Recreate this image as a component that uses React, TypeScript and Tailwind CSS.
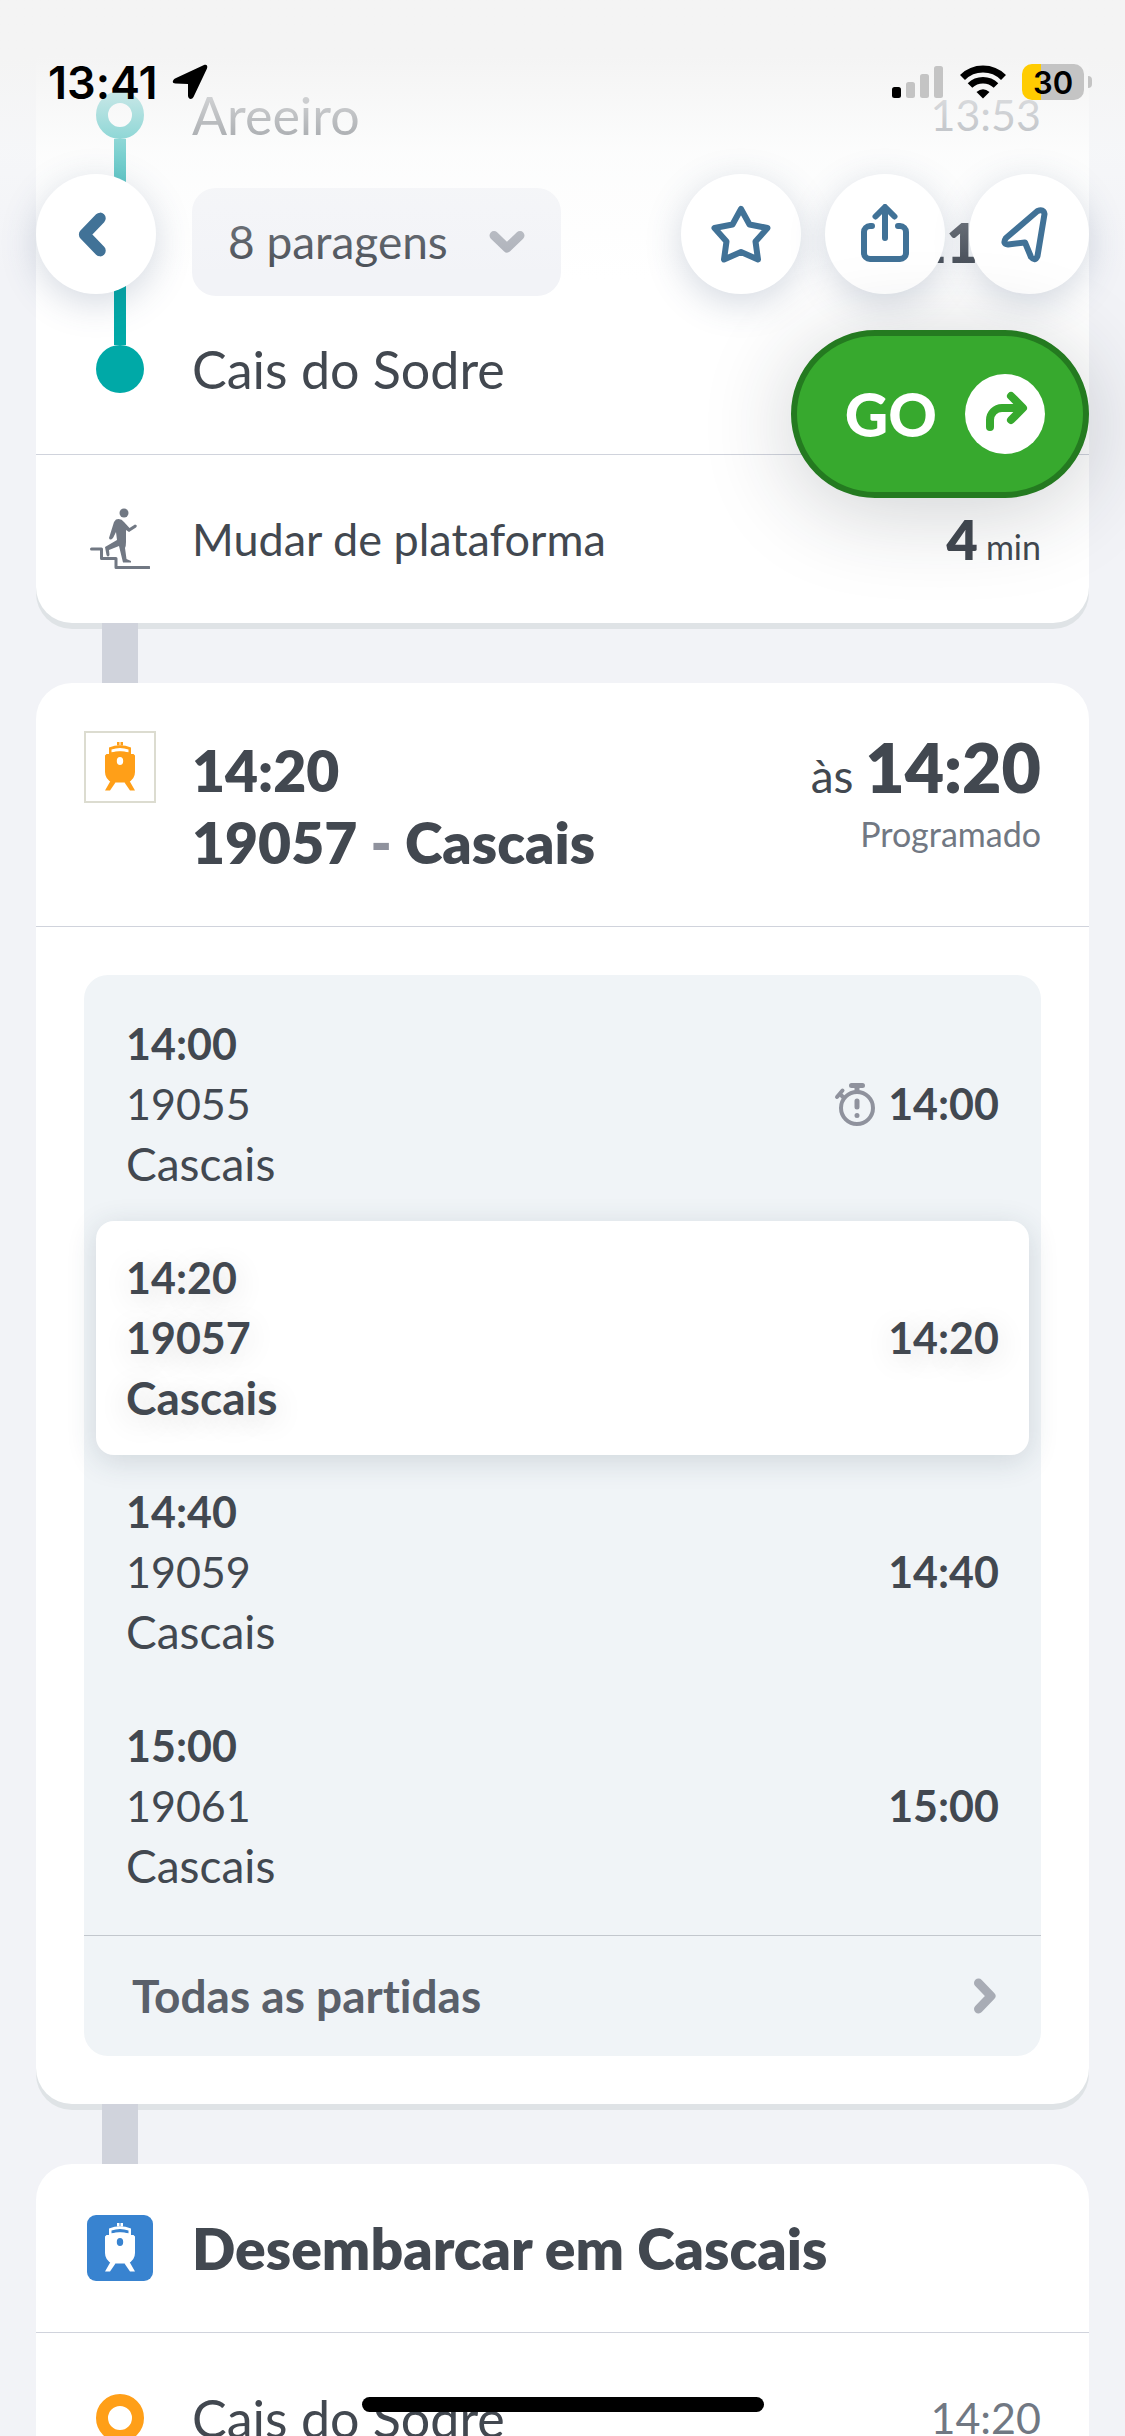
import type { ReactNode } from "react";

interface Departure {
  time: string;
  train: string;
  destination: string;
  unconfirmed?: boolean;
  selected?: boolean;
}

const DEPARTURES: Departure[] = [
  { time: "14:00", train: "19055", destination: "Cascais", unconfirmed: true },
  { time: "14:20", train: "19057", destination: "Cascais", selected: true },
  { time: "14:40", train: "19059", destination: "Cascais" },
  { time: "15:00", train: "19061", destination: "Cascais" },
];

function ChevronIcon({ className }: { className: string }) {
  return (
    <svg viewBox="0 0 24 36" className={className} fill="none" stroke="currentColor">
      <path d="M5.500 5 18 18 5.500 31" strokeWidth="9" strokeLinecap="round" strokeLinejoin="round" />
    </svg>
  );
}

function StarIcon() {
  return (
    <svg viewBox="0 0 60 60" className="size-[60px]" fill="none" stroke="currentColor">
      <path
        d="M30 5 38.500 20.500 56.500 24 44.500 37.500 47 55.500 30 48 13 55.500 15.500 37.500 3.500 24 21.500 20.500Z"
        strokeWidth="6"
        strokeLinejoin="round"
      />
    </svg>
  );
}

function ShareIcon() {
  return (
    <svg viewBox="0 0 60 60" className="size-[60px]" fill="none" stroke="currentColor">
      <path
        d="M17 22H15A6 6 0 0 0 9 28V49A6 6 0 0 0 15 55H45A6 6 0 0 0 51 49V28A6 6 0 0 0 45 22H43M30 34V4M20.500 12.500 30 3 39.500 12.500"
        strokeWidth="6"
        strokeLinecap="round"
        strokeLinejoin="round"
      />
    </svg>
  );
}

function NavigateIcon() {
  return (
    <svg viewBox="0 0 60 60" className="size-[60px]" fill="none" stroke="currentColor">
      <path
        d="M38.500 7 7 34Q3 40 9 40.500L26 38.500 32 53Q36 58 38.500 52L45.500 10Q44.500 4.500 38.500 7Z"
        strokeWidth="6"
        strokeLinejoin="round"
      />
    </svg>
  );
}

function TurnIcon() {
  return (
    <svg viewBox="0 0 80 80" className="size-20" fill="none" stroke="currentColor">
      <path
        d="M25 53V46A12 12 0 0 1 37 34H57M46 22 58 34 46 46"
        strokeWidth="8"
        strokeLinecap="round"
        strokeLinejoin="round"
      />
    </svg>
  );
}

function TrainIcon() {
  return (
    <svg viewBox="0 0 32 50" className="h-[50px] w-8" fill="currentColor">
      <path d="M13 0h2.500v3.500H13zM16.500 0H19v3.500h-2.500z" />
      <path
        fillRule="evenodd"
        d="M5 5.500Q16 1 27 5.500V12H5ZM7.500 7.500V10.500Q16 8 24.500 10.500V7.500Q16 4.500 7.500 7.500Z"
      />
      <path
        fillRule="evenodd"
        d="M5 11Q16 8.500 27 11V12H29.500L31 13.500V30Q31 37 24 40.500H8Q1 37 1 30V13.500L2.500 12H5ZM16 15A3.200 4 0 1 0 16 23A3.200 4 0 1 0 16 15Z"
      />
      <path d="M7 38 11.500 40.500 6 48.500H1ZM25 38 20.500 40.500 26 48.500H31Z" />
    </svg>
  );
}

function StairsIcon() {
  return (
    <svg viewBox="0 2 60 66" className="h-[66px] w-[60px] text-[#717883]" fill="currentColor">
      <circle cx="34" cy="9" r="4.500" />
      <path d="M26 15.500Q31 14 34 18L39.500 24 45 20.500Q48 21 46 23.500L39 28 36 26V38Q36 42 35 44L36.500 55 41 57V58.500H33L29 42 19 46 19.500 51Q18 54 16.500 51L15 43 27 36 26 28 23 34Q20 37 19 34L24 18Z" />
      <path
        d="M1.500 45H11.500V54.500H26V63.500H59"
        fill="none"
        stroke="currentColor"
        strokeWidth="3"
        strokeLinecap="round"
        strokeLinejoin="round"
      />
    </svg>
  );
}

function StopwatchIcon() {
  return (
    <svg
      viewBox="0 0 42 46"
      className="h-[46px] w-[42px] text-[#8f929d]"
      fill="none"
      stroke="currentColor"
      strokeLinecap="round"
    >
      <circle cx="23" cy="27" r="16" strokeWidth="4" />
      <path d="M17.500 4.500H28.500M23 5V10" strokeWidth="5" />
      <path d="M3 16 8.500 9.500M6 13 9 16" strokeWidth="4" />
      <path d="M23 20V26M23 34.500V34.600" strokeWidth="5" />
    </svg>
  );
}

function StatusBar() {
  return (
    <div className="absolute inset-x-0 top-0 flex h-[164px] items-center justify-between pr-[33px] pl-12 font-[Inter,sans-serif] text-black">
      <div className="flex items-center gap-[14px]">
        <span className="text-[45px] leading-none font-semibold">13:41</span>
        <svg viewBox="0 0 36 36" className="size-9" fill="currentColor">
          <path d="M32 1 3 14.500C0 16.500 0 19.500 3.500 19.500L16 20V32C16.500 35.500 20 36 21.500 33L35 4.500C36 1.500 34.500 0 32 1Z" />
        </svg>
      </div>
      <div className="flex items-center">
        <svg viewBox="0 0 52 34" className="mr-4 h-[34px] w-[52px]" fill="#c4c4c4">
          <rect x="0" y="22" width="9" height="11" rx="2.500" fill="#000" />
          <rect x="14" y="17" width="9" height="16" rx="2.500" />
          <rect x="28" y="9" width="9" height="24" rx="2.500" />
          <rect x="42" y="1" width="9" height="32" rx="2.500" />
        </svg>
        <svg viewBox="0 0 46 34" className="mr-4 h-[34px] w-[46px]" fill="none" stroke="#000">
          <path d="M2.500 12.500A29 29 0 0 1 43.500 12.500" strokeWidth="7" />
          <path d="M10 20.500A18.500 18.500 0 0 1 36 20.500" strokeWidth="6.500" />
          <path d="M23 33.500 16.500 27Q23 21.500 29.500 27Z" fill="#000" stroke="none" />
        </svg>
        <div className="flex h-9 w-[62px] items-center justify-center rounded-[10px] bg-linear-to-r from-[#ffcc01] from-31% to-[#c4c4c4] to-31%">
          <span className="text-[31px] leading-none font-semibold">30</span>
        </div>
        <div className="ml-1 h-3 w-1 rounded-r-full bg-[#c4c4c4]" />
      </div>
    </div>
  );
}

function RoundButton({ label, children }: { label: string; children: ReactNode }) {
  return (
    <button
      type="button"
      aria-label={label}
      className="flex size-[120px] items-center justify-center rounded-full bg-white text-[#417297] shadow-[0_9px_36px_rgba(60,80,120,0.22)]"
    >
      {children}
    </button>
  );
}

function Minutes({ value }: { value: number }) {
  return (
    <p className="flex items-baseline gap-2 pt-2">
      <strong className="text-[54px] font-extrabold">{value}</strong>
      <span className="text-[34px]">min</span>
    </p>
  );
}

function Connector() {
  return <div className="relative ml-[66px] h-[60px] w-9 bg-[#d0d3dc]" />;
}

function DepartureRow({ departure }: { departure: Departure }) {
  const { time, train, destination, unconfirmed, selected } = departure;
  return (
    <li>
      <button
        type="button"
        className={`flex w-full items-center justify-between rounded-[18px] px-[30px] py-[27px] text-left text-[43px] leading-[60px] ${
          selected
            ? "bg-white font-bold shadow-[0_6px_30px_rgba(40,60,80,0.16)] [text-shadow:0_6px_30px_rgba(0,0,0,0.16)]"
            : ""
        }`}
      >
        <span className="flex flex-col">
          <span className="font-bold">{time}</span>
          <span>{train}</span>
          <span className="text-[46px]">{destination}</span>
        </span>
        <span className="flex items-center gap-3 font-bold">
          {unconfirmed && <StopwatchIcon />}
          {time}
        </span>
      </button>
    </li>
  );
}

export default function App() {
  return (
    <div className="relative h-screen overflow-hidden bg-[#f2f3f7] font-[Lato,sans-serif] text-[46px] leading-[60px] text-[#424850] [font-variant-ligatures:none]">
      <main className="px-9">
        {/* Current leg, scrolled under the header */}
        <section className="rounded-b-[36px] bg-white shadow-[0_6px_0_#dfe3e6]">
          <div className="flex gap-9 px-12 pt-[91px] pb-[61px]">
            <div className="flex w-[72px] flex-col items-center">
              <span className="size-12 rounded-full border-12 border-[#00a9a7]" />
              <span className="w-3 grow bg-[#00a9a7]" />
              <span className="size-12 rounded-full bg-[#00a9a7]" />
            </div>
            <div className="flex grow flex-col gap-[49px]">
              <div className="flex h-12 items-center justify-between">
                <span className="text-[52px]">Areeiro</span>
                <span className="text-[43px] text-[#717883]">13:53</span>
              </div>
              <div className="flex items-center justify-between">
                <button
                  type="button"
                  className="flex h-[108px] w-[369px] items-center justify-between rounded-3xl bg-[#f2f3f7] pr-[42px] pl-9"
                >
                  8 paragens
                  <ChevronIcon className="h-9 w-6 rotate-90 text-[#a8acb5]" />
                </button>
                <Minutes value={11} />
              </div>
              <div className="flex h-12 items-center text-[52px]">Cais do Sodre</div>
            </div>
          </div>
          <div className="flex h-[169px] items-center gap-9 border-t border-[#d0d3dc] px-12">
            <div className="flex w-[72px] justify-center">
              <StairsIcon />
            </div>
            <span className="grow text-[45px]">Mudar de plataforma</span>
            <Minutes value={4} />
          </div>
        </section>

        <Connector />

        {/* Next leg with its departures */}
        <section className="rounded-[36px] bg-white shadow-[0_6px_0_#dfe3e6]">
          <header className="flex items-start gap-9 border-b border-[#d0d3dc] p-12">
            <div className="flex size-[72px] items-center justify-center border-2 border-[#dcdcd0] text-[#ff9f18]">
              <TrainIcon />
            </div>
            <h2 className="grow pt-[3px] text-[57px] leading-[72px] font-extrabold">
              14:20
              <br />
              19057 <span className="text-[#8f929d]">-</span> Cascais
            </h2>
            <div className="text-right">
              <p className="text-[46px] leading-[72px]">
                às <strong className="text-[68px] font-extrabold">14:20</strong>
              </p>
              <p className="text-[34px] leading-[44px] text-[#717883]">Programado</p>
            </div>
          </header>
          <div className="p-12">
            <div className="rounded-3xl bg-[#f0f4f7]">
              <ul className="p-3">
                {DEPARTURES.map((departure) => (
                  <DepartureRow key={departure.train} departure={departure} />
                ))}
              </ul>
              <a
                href="#partidas"
                className="flex h-[121px] items-center justify-between border-t border-[#c2c7cd] pr-11 pl-12 font-bold text-[#5a606a]"
              >
                Todas as partidas
                <ChevronIcon className="h-9 w-6 text-[#a8acb5]" />
              </a>
            </div>
          </div>
        </section>

        <Connector />

        <section className="rounded-t-[36px] bg-white">
          <header className="flex h-[169px] items-center gap-9 border-b border-[#d0d3dc] px-12">
            <div className="flex w-[72px] justify-center">
              <div className="flex size-[66px] items-center justify-center rounded-[9px] bg-[#3883d0] text-white">
                <TrainIcon />
              </div>
            </div>
            <h2 className="text-[57px] font-extrabold">Desembarcar em Cascais</h2>
          </header>
          <div className="flex items-center gap-9 px-12 py-[55px]">
            <div className="flex w-[72px] justify-center">
              <span className="size-12 rounded-full border-12 border-[#ff9f18]" />
            </div>
            <span className="grow text-[52px]">Cais do Sodre</span>
            <span className="text-[43px] text-[#717883]">14:20</span>
          </div>
        </section>
      </main>

      <div className="pointer-events-none absolute inset-x-0 top-0 h-[280px] bg-linear-to-b from-[#f4f4f4] from-20% via-[#f9fafa]/50 via-55% to-white/0" />
      <StatusBar />

      <nav className="absolute inset-x-9 top-[174px] flex flex-col items-end gap-9">
        <div className="flex w-full items-center gap-6">
          <RoundButton label="Voltar">
            <ChevronIcon className="mr-2 h-[45px] w-[30px] rotate-180" />
          </RoundButton>
          <span className="grow" />
          <RoundButton label="Favorito">
            <StarIcon />
          </RoundButton>
          <RoundButton label="Partilhar">
            <ShareIcon />
          </RoundButton>
          <RoundButton label="Navegar">
            <NavigateIcon />
          </RoundButton>
        </div>
        <button
          type="button"
          className="flex h-[168px] items-center gap-7 rounded-full border-6 border-[#247a20] bg-[#37a92e] pr-[38px] pl-12 text-[60px] font-black text-white shadow-[0_12px_90px_rgba(30,40,50,0.22)]"
        >
          GO
          <span className="rounded-full bg-white text-[#37a92e]">
            <TurnIcon />
          </span>
        </button>
      </nav>

      <div className="absolute bottom-6 left-1/2 h-[15px] w-[402px] -translate-x-1/2 rounded-full bg-black" />
    </div>
  );
}
